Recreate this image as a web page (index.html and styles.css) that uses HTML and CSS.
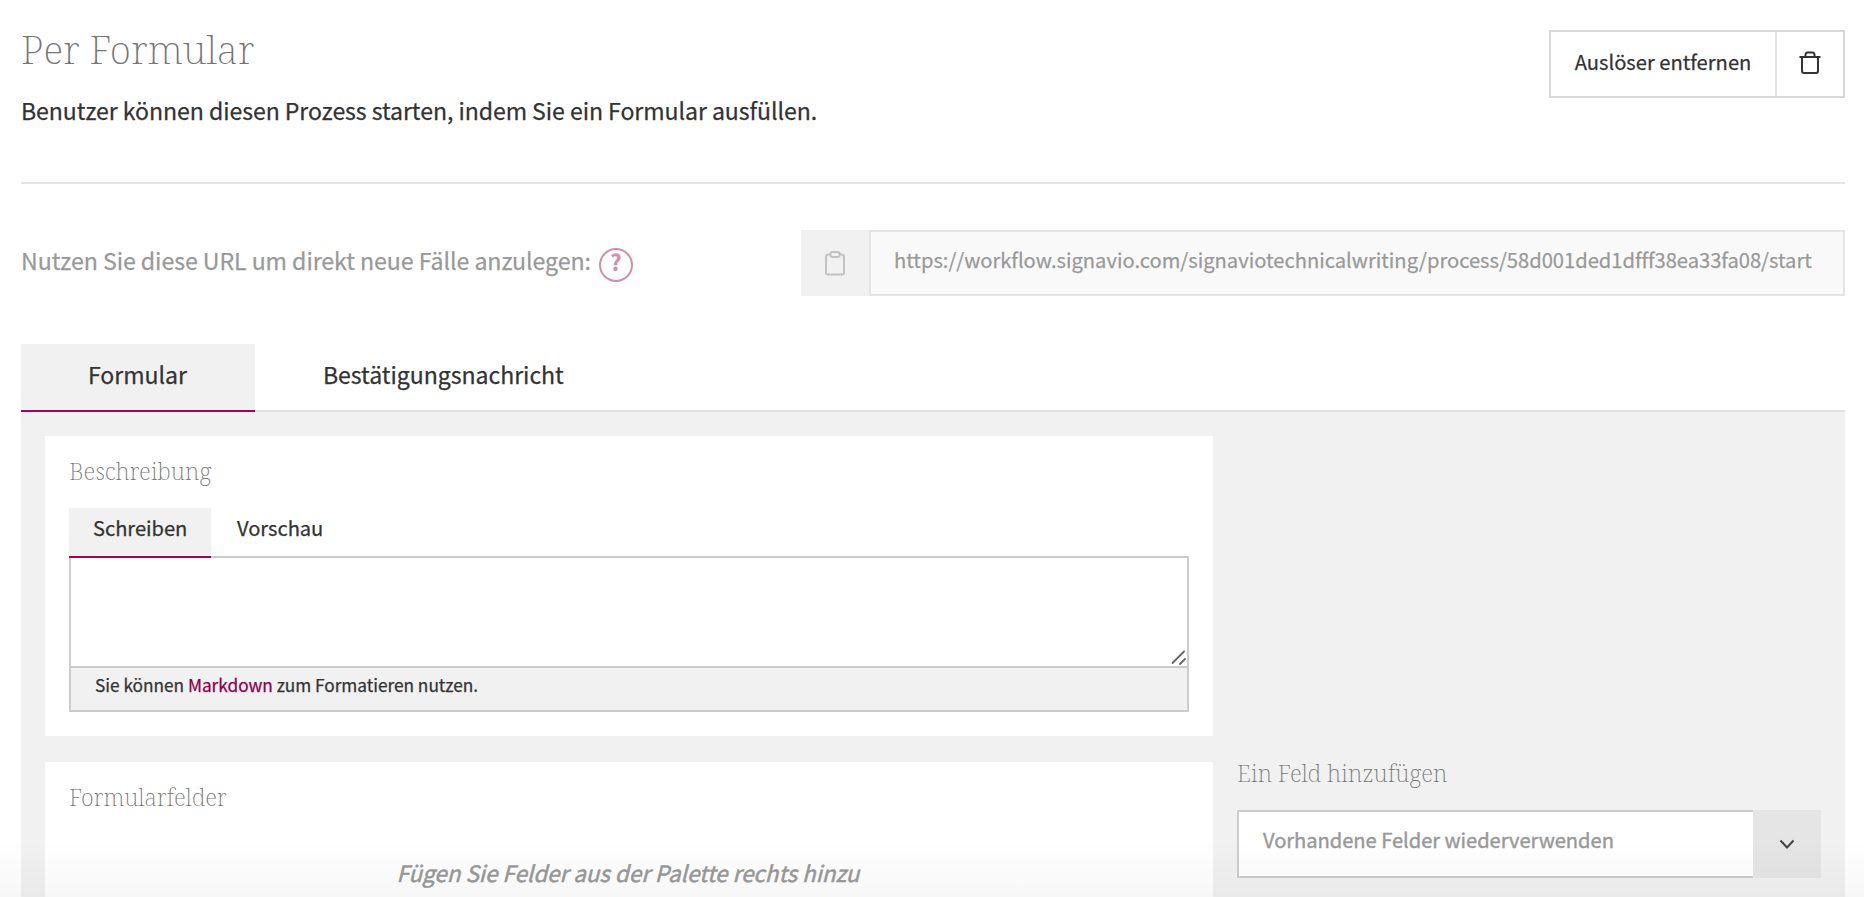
FILE: index.html
```html
<!DOCTYPE html>
<html lang="de">
<head>
<meta charset="utf-8">
<title>Per Formular</title>
<link rel="stylesheet" href="styles.css">
</head>
<body>
<main class="page">
  <header class="header">
    <div class="intro">
      <h1 class="title">Per Formular</h1>
      <p class="lead">Benutzer können diesen Prozess starten, indem Sie ein Formular ausfüllen.</p>
    </div>
    <div class="remove">
      <button class="remove-label">Auslöser entfernen</button>
      <button class="remove-icon" aria-label="Löschen">
        <svg width="22" height="24" viewBox="0 0 22 24" fill="none" stroke="#333" stroke-width="2"><path d="M.5 6H21.500M3 6V20Q3 22 5 22H17Q19 22 19 20V6M6.500 6V4Q6.500 1.500 8.500 1.500H13.500Q15.500 1.500 15.500 4V6"/></svg>
      </button>
    </div>
  </header>

  <section class="url-row">
    <div class="url-label"><span>Nutzen Sie diese URL um direkt neue Fälle anzulegen:</span><span class="help">?</span></div>
    <div class="url-field">
      <div class="copy">
        <svg width="20" height="25" viewBox="0 0 20 25" fill="none" stroke="#c2c2c2" stroke-width="2"><path d="M5.500 3.500H3.500Q1 3.500 1 6V21.500Q1 23.500 3 23.500H17Q19 23.500 19 21.500V6Q19 3.500 16.500 3.500H14.500"/><rect x="5.500" y="1" width="9" height="5" rx="2"/></svg>
      </div>
      <div class="url">https://workflow.signavio.com/signaviotechnicalwriting/process/58d001ded1dfff38ea33fa08/start</div>
    </div>
  </section>

  <nav class="tabs">
    <a class="tab active">Formular</a>
    <a class="tab">Bestätigungsnachricht</a>
  </nav>

  <div class="panel">
    <div class="main-col">
      <section class="card">
        <h2 class="subtitle">Beschreibung</h2>
        <div class="editor-tabs">
          <a class="editor-tab active">Schreiben</a>
          <a class="editor-tab">Vorschau</a>
        </div>
        <div class="editor">
          <svg width="15" height="15" viewBox="0 0 15 15" stroke="#666" stroke-width="1.800" stroke-linecap="round"><path d="M1.500 13L13 1.500M9 14L14 9"/></svg>
        </div>
        <div class="hint">Sie können <a class="link">Markdown</a> zum Formatieren nutzen.</div>
      </section>
      <section class="card fields">
        <h2 class="subtitle">Formularfelder</h2>
        <p class="empty">Fügen Sie Felder aus der Palette rechts hinzu</p>
      </section>
    </div>
    <aside class="side">
      <h2 class="subtitle">Ein Feld hinzufügen</h2>
      <div class="select">
        <span class="select-text">Vorhandene Felder wiederverwenden</span>
        <span class="select-arrow"><svg width="16" height="11" viewBox="0 0 16 11" fill="none" stroke="#444" stroke-width="2"><path d="M1.500 1.500L8 8.500L14.500 1.500"/></svg></span>
      </div>
    </aside>
  </div>
</main>
<div class="fade"></div>
</body>
</html>
```
FILE: styles.css
```css
* { box-sizing: border-box; margin: 0; padding: 0; }
body {
  height: 897px;
  overflow: hidden;
  position: relative;
  background: #fff;
  color: #333;
  font: 20.15px/30px "Noto Sans CJK SC", "Open Sans", sans-serif;
  -webkit-text-stroke: 0.25px currentColor;
}
.page { padding: 0 19px 0 21px; }
.header {
  display: flex;
  justify-content: space-between;
  align-items: flex-start;
  height: 184px;
  padding-top: 30px;
  border-bottom: 2px solid #e5e5e5;
}
.title, .subtitle {
  font-family: "Noto Serif", "Noto Serif CJK SC", serif;
  font-weight: 200;
  color: #777;
  -webkit-text-stroke-width: 0;
}
.title { font-size: 39.2px; line-height: 40px; margin-top: -1px; }
.lead { font-size: 23.1px; line-height: 32px; margin-top: 25px; letter-spacing: -0.065px; }
.remove { display: flex; width: 296px; height: 68px; border: 2px solid #d8d8d8; }
.remove button {
  border: 0;
  background: none;
  color: inherit;
  font: inherit;
  -webkit-text-stroke: inherit;
}
.remove .remove-label { flex: 1; padding-bottom: 5px; border-right: 2px solid #e5e5e5; white-space: nowrap; }
.remove .remove-icon { width: 66px; padding-bottom: 2px; display: flex; align-items: center; justify-content: center; }

.url-row { display: flex; justify-content: space-between; margin-top: 46px; height: 66px; }
.url-label { display: flex; gap: 8px; padding-top: 14px; color: #999; font-size: 23.15px; line-height: 32px; letter-spacing: -0.065px; }
.help {
  width: 34px;
  height: 34px;
  margin-top: 4px;
  border: 2px solid #d28fab;
  border-radius: 50%;
  color: #d28fab;
  font-size: 22px;
  font-weight: 700;
  line-height: 22px;
  text-align: center;
}
.url-field { display: flex; width: 1044px; }
.copy { width: 68px; display: flex; align-items: center; justify-content: center; background: #f1f1f1; }
.copy svg { margin-left: -1px; }
.url {
  flex: 1;
  padding: 13px 0 0 23px;
  border: 2px solid #e5e5e5;
  background: #f9f9f9;
  color: #999;
  white-space: nowrap;
  letter-spacing: -0.01px;
}

.tabs { display: flex; margin-top: 48px; height: 68px; border-bottom: 2px solid #e2e2e2; }
.tab { height: 68px; padding: 14px 68px 0; font-size: 23.1px; line-height: 32px; letter-spacing: -0.05px; }
.tab.active { width: 234px; padding-left: 67px; background: #f1f1f1; border-bottom: 2px solid #aa0055; }

.panel { display: flex; gap: 24px; height: 485px; padding: 24px 24px 0; background: #f1f1f1; }
.main-col { width: 1168px; }
.card { height: 300px; padding: 21px 24px 0; background: #fff; }
.subtitle { font-size: 23.4px; line-height: 28px; letter-spacing: -0.1px; }
.editor-tabs { display: flex; height: 50px; margin-top: 23px; border-bottom: 2px solid #ccc; }
.editor-tab { height: 50px; padding: 5px 24px 0 26px; letter-spacing: -0.05px; }
.editor-tab.active { width: 142px; padding-left: 24px; background: #f1f1f1; border-bottom: 2px solid #aa0055; }
.editor {
  display: flex;
  align-items: flex-end;
  justify-content: flex-end;
  height: 108px;
  padding: 0 1px 1px 0;
  border: 2px solid #ccc;
  border-width: 0 2px;
}
.hint {
  height: 46px;
  padding: 4px 24px 0;
  border: 2px solid #ccc;
  background: #f1f1f1;
  font-size: 17.3px;
  line-height: 26px;
  letter-spacing: -0.03px;
}
.link { color: #8c004b; }
.fields { height: 135px; margin-top: 26px; }
.empty { margin-top: 45px; padding-right: 2px; text-align: center; color: #999; font-size: 22.4px; line-height: 32px; font-style: italic; -webkit-text-stroke-width: 0.5px; }
.side { flex: 1; padding-top: 323px; }
.select { display: flex; height: 68px; margin-top: 23px; }
.select-text {
  flex: 1;
  padding: 13px 0 0 24px;
  border: 2px solid #ccc;
  border-right: 0;
  background: #fff;
  color: #999;
  letter-spacing: -0.05px;
  -webkit-text-stroke-width: 0.4px;
}
.select-arrow { width: 68px; display: flex; align-items: center; justify-content: center; background: #e5e5e5; }
.fade {
  position: absolute;
  inset: auto 0 0 0;
  height: 56px;
  background: linear-gradient(to bottom, rgba(0, 0, 0, 0), rgba(0, 0, 0, 0.03));
}
```
